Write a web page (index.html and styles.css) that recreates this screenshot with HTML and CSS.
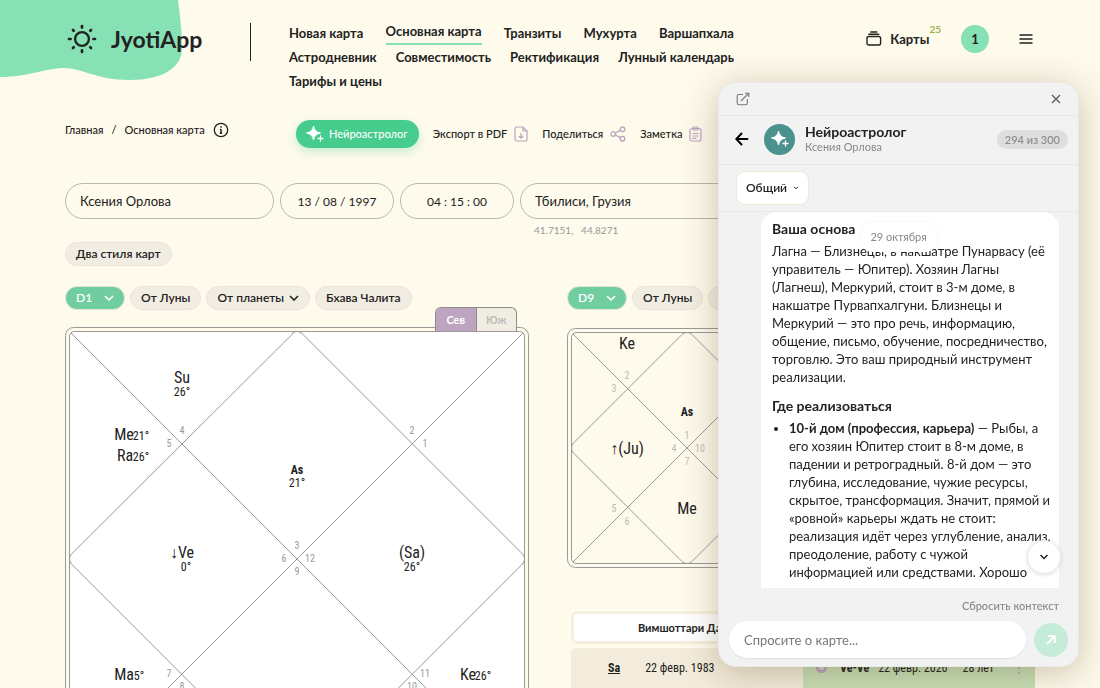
FILE: index.html
```html
<!DOCTYPE html>
<html lang="ru">
<head>
<meta charset="utf-8">
<meta name="viewport" content="width=device-width, initial-scale=1">
<title>JyotiApp — Основная карта</title>
<link rel="stylesheet" href="styles.css">
</head>
<body>
<svg class="blob" width="184" height="82" viewBox="0 0 184 82" aria-hidden="true"><path fill="#86e1b5" d="M0 0H178C180 16 182 32 182 48C182 68 162 80 130 80C97 80 82 68 64 68C46 68 28 77 0 77Z"/></svg>

<header class="header">
  <a class="logo" href="#">
    <svg width="30" height="30" viewBox="0 0 30 30" fill="none" stroke="#222" aria-hidden="true"><circle cx="15" cy="15" r="6.9" stroke-width="2.3"/><path stroke-width="2.7" stroke-linecap="round" d="M15 2v1.6M15 26.4V28M2 15h1.6M26.4 15H28M6 6l.7.7M23.3 23.3l.7.7M24 6l-.7.7M6.700 23.300L6 24"/></svg>
    <span>JyotiApp</span>
  </a>
  <nav class="nav">
    <div class="nav-row"><a href="#">Новая карта</a><a href="#" class="active">Основная карта</a><a href="#">Транзиты</a><a href="#">Мухурта</a><a href="#">Варшапхала</a></div>
    <div class="nav-row"><a href="#">Астродневник</a><a href="#">Совместимость</a><a href="#">Ректификация</a><a href="#">Лунный календарь</a></div>
    <div class="nav-row"><a href="#">Тарифы и цены</a></div>
  </nav>
  <div class="user">
    <a class="cards" href="#">
      <svg width="16" height="16" viewBox="0 0 16 16" fill="none" stroke="#222" stroke-width="1.4" stroke-linecap="round" aria-hidden="true"><rect x="1" y="5.500" width="13.600" height="8.500" rx="1.800"/><path d="M2.800 3.200h10M4.800 1h6"/></svg>
      <span>Карты</span><sup>25</sup>
    </a>
    <button class="avatar">1</button>
    <button class="menu" aria-label="Меню"><svg width="14" height="10" viewBox="0 0 14 10" stroke="#222" stroke-width="1.500" aria-hidden="true"><path d="M.5 1h13M.5 5h13M.5 9h13"/></svg></button>
  </div>
</header>

<main class="main">
  <div class="toolbar">
    <div class="crumbs"><a href="#">Главная</a><span>/</span><span>Основная карта</span>
      <svg width="16" height="16" viewBox="0 0 16 16" fill="none" stroke="#222" stroke-width="1.300" aria-hidden="true"><circle cx="8" cy="8" r="6.700"/><path stroke-width="1.500" d="M8 4.200v1.600M8 7v4.500M7 7.500h1M6.800 11.300h2.400"/></svg>
    </div>
    <div class="actions">
      <button class="ai"><svg width="18" height="18" viewBox="0 0 18 18" fill="#fff" aria-hidden="true"><path d="M7.500 1Q8.500 7 14.500 8Q8.500 9 7.500 15Q6.500 9 .5 8Q6.500 7 7.500 1Z" stroke="#fff" stroke-linejoin="round"/><path d="M14.500 11v5M12 13.500h5" stroke="#fff" stroke-width="1.300" stroke-linecap="round"/></svg>Нейроастролог</button>
      <button>Экспорт в PDF<svg width="14" height="16" viewBox="0 0 14 16" fill="none" stroke="#bca3c1" stroke-width="1.200" aria-hidden="true"><path d="M3 1h6l4 4v8a2 2 0 0 1-2 2H3a2 2 0 0 1-2-2V3a2 2 0 0 1 2-2ZM9 1v4h4M7 7v5M4.800 10L7 12.200 9.200 10"/></svg></button>
      <button>Поделиться<svg width="16" height="16" viewBox="0 0 16 16" fill="none" stroke="#bca3c1" stroke-width="1.300" aria-hidden="true"><circle cx="3.200" cy="8" r="2.300"/><circle cx="12.500" cy="3.300" r="2.300"/><circle cx="12.500" cy="12.700" r="2.300"/><path d="M5.300 7l5-2.600M5.300 9l5 2.600"/></svg></button>
      <button>Заметка<svg width="13" height="16" viewBox="0 0 13 16" fill="none" stroke="#bca3c1" stroke-width="1.200" aria-hidden="true"><rect x="1" y="2.500" width="11" height="12.500" rx="2"/><rect x="4" y="1" width="5" height="3" rx="1"/><path d="M3.500 7.500h6M3.500 10h6M3.500 12.300h4"/></svg></button>
    </div>
  </div>

  <form class="birth">
    <input class="f-name" aria-label="Имя" value="Ксения Орлова">
    <input class="f-date" aria-label="Дата рождения" value="13 / 08 / 1997">
    <input class="f-time" aria-label="Время рождения" value="04 : 15 : 00">
    <div class="place"><input aria-label="Место рождения" value="Тбилиси, Грузия"><span>41.7151,&nbsp;&nbsp; 44.8271</span></div>
  </form>
  <button class="chip">Два стиля карт</button>

  <div class="charts">
    <section>
      <div class="chips">
        <button class="chip on">D1<svg class="chev" viewBox="0 0 10 6" aria-hidden="true"><path d="M1 1l4 4 4-4"/></svg></button>
        <button class="chip">От Луны</button>
        <button class="chip">От планеты<svg class="chev" viewBox="0 0 10 6" aria-hidden="true"><path d="M1 1l4 4 4-4"/></svg></button>
        <button class="chip">Бхава Чалита</button>
      </div>
      <div class="chart-wrap">
        <div class="tabs"><button class="sel">Сев</button><button>Юж</button></div>
        <svg class="chart" viewBox="0 0 464 464" role="img" aria-label="D1">
          <rect class="frame outer" x=".5" y=".5" width="463" height="463" rx="8"/>
          <rect class="frame white" x="4.500" y="4.500" width="455" height="455" rx="5"/>
          <path class="line" d="M6 6L458 458M458 6L6 458M228 6.500L6.500 227Q2.500 232 6.500 237L227 457.500Q232 461.500 237 457.500L457.500 237Q461.500 232 457.500 227L237 6.500Q232 2.500 227 6.500"/>
          <g class="planet"><text x="117" y="56">Su</text><text x="59" y="113">Me</text><text x="60" y="134">Ra</text><text x="117" y="231">↓Ve</text><text x="347" y="231">(Sa)</text><text x="59" y="353">Ma</text><text x="403" y="353">Ke</text></g>
          <g class="deg"><text x="117" y="69">26°</text><text x="76" y="113">21°</text><text x="76" y="134">26°</text><text x="232" y="160">21°</text><text x="121" y="244">0°</text><text x="347" y="244">26°</text><text x="74" y="353">5°</text><text x="418" y="353">26°</text></g>
          <text class="asc" x="232" y="147">As</text>
          <g class="house"><text x="117" y="107">4</text><text x="104" y="120">5</text><text x="347" y="107">2</text><text x="360" y="120">1</text><text x="232" y="222">3</text><text x="219" y="235">6</text><text x="245" y="235">12</text><text x="232" y="248">9</text><text x="104" y="350">7</text><text x="117" y="363">8</text><text x="360" y="350">11</text><text x="347" y="363">10</text></g>
        </svg>
      </div>
    </section>

    <section>
      <div class="chips">
        <button class="chip on">D9<svg class="chev" viewBox="0 0 10 6" aria-hidden="true"><path d="M1 1l4 4 4-4"/></svg></button>
        <button class="chip">От Луны</button>
        <button class="chip">От планеты<svg class="chev" viewBox="0 0 10 6" aria-hidden="true"><path d="M1 1l4 4 4-4"/></svg></button>
      </div>
      <svg class="chart small" viewBox="0 0 240 240" role="img" aria-label="D9">
        <rect class="frame" x=".5" y=".5" width="239" height="239" rx="8"/>
        <rect class="frame" x="4.500" y="4.500" width="231" height="231" rx="5"/>
        <path class="line" d="M6 6L234 234M234 6L6 234M115 6.500L6.500 115Q2.500 120 6.500 125L115 233.500Q120 237.500 125 233.500L233.500 125Q237.500 120 233.500 115L125 6.500Q120 2.500 115 6.500"/>
        <g class="planet"><text x="60" y="21">Ke</text><text x="60" y="126">↑(Ju)</text><text x="120" y="186">Me</text></g>
        <text class="asc" x="120" y="88">As</text>
        <g class="house light"><text x="60" y="51">2</text><text x="47" y="64">3</text><text x="120" y="111">1</text><text x="107" y="124">4</text><text x="133" y="124">10</text><text x="120" y="137">7</text><text x="47" y="184">5</text><text x="60" y="197">6</text></g>
      </svg>
      <div class="dasha">
        <h2>Вимшоттари Даша</h2>
        <div class="periods">
          <div class="period"><a href="#">Sa</a><span>22 февр. 1983</span></div>
          <div class="period now"><i></i><b>Ve-Ve</b><span>22 февр. 2026</span><span class="age">28 лет</span><button aria-label="Ещё">⋮</button></div>
        </div>
      </div>
    </section>
  </div>
</main>

<aside class="chat">
  <div class="chat-bar">
    <button aria-label="Открыть отдельно"><svg width="14" height="14" viewBox="0 0 14 14" fill="none" stroke="#777" stroke-width="1.100" aria-hidden="true"><path d="M7 2.500H3a1.800 1.800 0 0 0-1.800 1.800V11A1.800 1.800 0 0 0 3 12.800h6.500a1.800 1.800 0 0 0 1.800-1.800V7M5 9L12.800 1.200M9 1.200h3.800V5"/></svg></button>
    <button aria-label="Закрыть"><svg width="10" height="10" viewBox="0 0 10 10" stroke="#666" stroke-width="1.500" aria-hidden="true"><path d="M1 1l8 8M9 1L1 9"/></svg></button>
  </div>
  <div class="chat-head">
    <button aria-label="Назад"><svg width="14" height="14" viewBox="0 0 14 14" fill="none" stroke="#000" stroke-width="1.900" stroke-linecap="round" aria-hidden="true"><path d="M12.500 7H1.500M6.500 1.500L1.300 7l5.200 5.500"/></svg></button>
    <div class="bot"><svg width="18" height="18" viewBox="0 0 18 18" fill="#fff" aria-hidden="true"><path d="M7.500 1Q8.500 7 14.500 8Q8.500 9 7.500 15Q6.500 9 .5 8Q6.500 7 7.500 1Z" stroke="#fff" stroke-linejoin="round"/><path d="M14.500 11v5M12 13.500h5" stroke="#fff" stroke-width="1.300" stroke-linecap="round"/></svg></div>
    <div class="who"><strong>Нейроастролог</strong><span>Ксения Орлова</span></div>
    <span class="quota">294 из 300</span>
  </div>
  <div class="chat-topic"><button>Общий<svg width="6" height="4" viewBox="0 0 6 4" fill="none" stroke="#222" aria-hidden="true"><path d="M1 .8l2 2 2-2"/></svg></button></div>
  <div class="log">
    <span class="day">29 октября</span>
    <article class="msg">
      <h3>Ваша основа</h3>
      <p>Лагна — Близнецы, в накшатре Пунарвасу (её<br>управитель — Юпитер). Хозяин Лагны<br>(Лагнеш), Меркурий, стоит в 3-м доме, в<br>накшатре Пурвапхалгуни. Близнецы и<br>Меркурий — это про речь, информацию,<br>общение, письмо, обучение, посредничество,<br>торговлю. Это ваш природный инструмент<br>реализации.</p>
      <h3>Где реализоваться</h3>
      <ul><li><b>10-й дом (профессия, карьера)</b> — Рыбы, а<br>его хозяин Юпитер стоит в 8-м доме, в<br>падении и ретроградный. 8-й дом — это<br>глубина, исследование, чужие ресурсы,<br>скрытое, трансформация. Значит, прямой и<br>«ровной» карьеры ждать не стоит:<br>реализация идёт через углубление, анализ,<br>преодоление, работу с чужой<br>информацией или средствами. Хорошо</li></ul>
    </article>
    <button class="down" aria-label="Вниз"><svg width="10" height="6" viewBox="0 0 10 6" fill="none" stroke="#222" stroke-width="1.500" aria-hidden="true"><path d="M1.500 1L5 4.500 8.500 1"/></svg></button>
  </div>
  <form class="ask">
    <button type="button" class="reset">Сбросить контекст</button>
    <div class="ask-row">
      <input aria-label="Вопрос" placeholder="Спросите о карте...">
      <button type="button" class="send" aria-label="Отправить"><svg width="10" height="10" viewBox="0 0 10 10" fill="none" stroke="#fff" stroke-width="1.800" aria-hidden="true"><path d="M1 9L8.500 1.500M2 1.200h6.800V8"/></svg></button>
    </div>
  </form>
</aside>
</body>
</html>
```

FILE: styles.css
```css
:root {
  --font: Lato, "Open Sans", sans-serif;
  --narrow: "Roboto Condensed", "Liberation Sans Narrow", Roboto, sans-serif;
  --ink: #222;
}
* { box-sizing: border-box; }
body {
  margin: 0;
  height: 100vh;
  overflow: hidden;
  background: #fefaec;
  color: var(--ink);
  font: 13px/18px var(--font);
}
button, input { font: inherit; color: inherit; }
button { border: 0; padding: 0; background: none; cursor: pointer; white-space: nowrap; }
a { color: inherit; text-decoration: none; }
svg { flex: none; display: block; }

.blob { position: absolute; left: 0; top: 0; z-index: -1; }

.header { display: flex; align-items: flex-start; padding: 21px 65px 0 67px; }
.logo { display: flex; align-items: center; gap: 14px; width: 183px; height: 36px; font-size: 23px; font-weight: 700; }
.nav { display: flex; flex-direction: column; width: 484px; padding-left: 39px; position: relative; font-size: 13px; font-weight: 700; }
.nav::before { content: ""; position: absolute; left: 0; top: 2px; width: 1px; height: 38px; background: #222; }
.nav-row { display: flex; justify-content: space-between; height: 24px; line-height: 24px; white-space: nowrap; }
.nav-row .active { height: 24px; line-height: 21px; border-bottom: 2px solid #86e1b5; }
.user { display: flex; align-items: center; height: 36px; margin-left: auto; font-weight: 700; }
.cards { display: flex; align-items: center; gap: 8px; }
.cards sup { align-self: flex-start; margin: -10px 0 0 -8px; font-size: 10px; line-height: 18px; color: #97b54c; }
.avatar { width: 28px; height: 28px; margin-left: 20px; border-radius: 50%; background: #86e1b5; font-weight: 700; }
.menu { margin: 0 2px 0 30px; }

.main { padding: 0 69px 0 65px; }
.toolbar { display: flex; align-items: center; height: 28px; margin-top: 27px; font-size: 11px; font-weight: 500; }
.crumbs { display: flex; align-items: center; gap: 8px; width: 231px; margin-top: -8px; }
.actions { display: flex; align-items: center; gap: 14px; }
.actions button { display: flex; align-items: center; gap: 7px; }
.actions .ai { height: 28px; padding: 0 11px 0 10px; gap: 5px; border-radius: 14px; background: #46cc8d; color: #fff; box-shadow: 0 4px 8px rgba(70, 204, 141, .28); }

.birth { display: flex; gap: 6px; margin-top: 35px; }
.birth input { height: 36px; padding: 0 14px; border: 1px solid #b9b7af; border-radius: 18px; background: transparent; }
.f-name { width: 209px; }
.birth .f-date, .birth .f-time { width: 114px; text-align: center; padding: 0; font-size: 12px; }
.place { flex: 1; }
.place input { width: 100%; }
.place span { display: block; padding: 3px 14px 0; font-size: 10px; line-height: 16px; color: #999; }
.chip { display: inline-flex; align-items: center; gap: 5px; height: 24px; padding: 0 10px; border: 1px solid #e8e4dc; border-radius: 12px; background: #f2ede3; font-size: 12px; font-weight: 600; }
.birth + .chip { margin-top: 4px; }
.chip.on { gap: 12px; background: #70cda0; color: #fff; }
.chev { width: 10px; height: 6px; fill: none; stroke: currentColor; stroke-width: 1.6; }
.chips { display: flex; gap: 5px; }

.charts { display: grid; grid-template-columns: 1fr 1fr; gap: 38px; margin-top: 20px; }
.charts section { min-width: 0; }
.chart-wrap { position: relative; margin-top: 17px; }
.chart { width: 100%; }
.chart.small { width: 240px; margin-top: 18px; }
.tabs { position: absolute; right: 12px; top: -20px; display: flex; width: 82px; height: 24px; border: 1px solid #8d8a87; border-bottom: 0; border-radius: 6px 6px 0 0; background: #f2ede3; overflow: hidden; }
.tabs button { flex: 1; font-size: 11px; font-weight: 700; color: #bbb; }
.tabs .sel { background: #bda5c0; color: #fff; border-right: 1px solid #8d8a87; }
.frame { fill: none; stroke: #999; }
.white { fill: #fff; }
.line { fill: none; stroke: #999; }
.chart text { font-family: var(--narrow); text-anchor: middle; fill: #222; }
.planet { font-size: 16px; }
.deg { font-size: 12px; }
.asc { font-size: 12px; font-weight: 700; }
.chart .house text { font-size: 10px; fill: #999; }
.chart .light text { fill: #bbb; }

.dasha { margin: 43px -4px 0 4px; }
.dasha h2 { width: 50%; margin: 0; padding: 6px 0; border: 3px solid #f5efdf; border-radius: 6px; background: #fff; text-align: center; font-size: 11px; line-height: 15px; }
.periods { display: grid; grid-template-columns: 1fr 1fr; margin-top: 4px; font: 12px/18px var(--narrow); white-space: nowrap; }
.period { display: flex; align-items: flex-start; min-width: 0; height: 80px; padding: 11px 10px 0 37px; gap: 25px; background: #f3ecdc; border-radius: 6px 0 0 0; }
.period a { font-weight: 700; text-decoration: underline; }
.period.now { padding-left: 13px; gap: 9px; background: #c8dfb6; border-radius: 0; }
.period i { width: 11px; height: 11px; margin: 3px 4px 0 0; border: 3px solid #bda5c0; border-radius: 50%; }
.age { margin-left: auto; }
.period button { margin-left: 10px; color: #bda5c0; font-weight: 700; }

.chat { position: fixed; right: 21px; top: 82px; bottom: 21px; width: 361px; display: flex; flex-direction: column; border: 1px solid #e9e9e9; border-radius: 18px; background: #f2f2f2; box-shadow: 0 6px 36px rgba(80, 60, 20, .3); }
.chat-bar { display: flex; justify-content: space-between; align-items: center; height: 33px; padding: 0 17px; border-bottom: 1px solid #e7e7e7; }
.chat-head { display: flex; align-items: center; height: 49px; padding: 0 10px 2px 16px; border-bottom: 1px solid #e7e7e7; }
.bot { display: grid; place-items: center; width: 31px; height: 31px; margin: 0 10px 0 15px; border-radius: 50%; background: #4b918d; }
.who { display: flex; flex-direction: column; flex: 1; }
.who strong { font-size: 14px; line-height: 16px; }
.who span { font-size: 11px; line-height: 14px; color: #888; }
.quota { padding: 0 8px; border-radius: 10px; background: #dedede; color: #888; font-size: 11px; line-height: 19px; font-weight: 500; }
.chat-topic { height: 47px; padding: 6px 17px; border-bottom: 1px solid #eceade; }
.chat-topic button { display: flex; align-items: center; gap: 6px; height: 34px; padding: 0 9px; border: 1px solid #eee9d8; border-radius: 9px; background: #fff; font-size: 12px; font-weight: 600; }
.log { position: relative; flex: 1; min-height: 0; padding: 0 19px 0 42px; }
.msg { height: 100%; overflow: hidden; padding: 8px 11px 0; border-radius: 16px 16px 0 0; background: #fff; white-space: nowrap; }
.msg h3 { margin: 0; font-size: 14px; line-height: 18px; }
.msg p { margin: 4px 0 11px; }
.msg ul { margin: 4px 0 0; padding-left: 17px; }
.day { position: absolute; left: 50%; top: 10px; transform: translateX(-50%); padding: 0 10px; border-radius: 12px; background: #fff; box-shadow: 0 0 3px rgba(0, 0, 0, .06); color: #888; font-size: 11px; line-height: 30px; white-space: nowrap; }
.down { position: absolute; right: 17px; bottom: 14px; display: grid; place-items: center; width: 34px; height: 34px; border: 1px solid #eee9dc; border-radius: 50%; background: #fff; box-shadow: 0 1px 4px rgba(0, 0, 0, .12); }
.ask { display: flex; flex-direction: column; padding: 10px 10px 8px; }
.reset { align-self: flex-end; margin-right: 9px; color: #888; font-size: 11px; line-height: 16px; font-weight: 500; }
.ask-row { display: flex; align-items: center; gap: 8px; margin-top: 7px; }
.ask input { flex: 1; min-width: 0; height: 37px; padding: 0 15px; border: 0; border-radius: 19px; background: #fff; box-shadow: 0 1px 2px rgba(0, 0, 0, .07); }
.ask input::placeholder { color: #777; opacity: 1; }
.send { display: grid; place-items: center; width: 34px; height: 34px; border-radius: 50%; background: #c5ebd9; }
```
